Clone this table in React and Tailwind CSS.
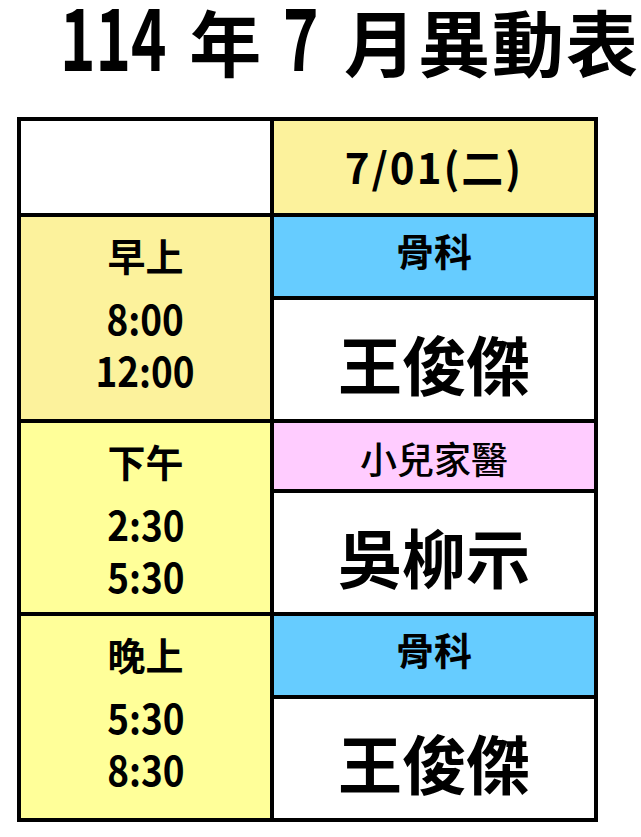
const FONT = "font-['Noto_Sans_CJK_TC','Noto_Sans_CJK_JP',sans-serif]";

function TimeRow({ label, t1, t2, leftBg, topBg, topText, topH, topWeight, topPad, name, bottomBorder }) {
  return (
    <div className={`flex ${bottomBorder ? "border-b-4 border-black" : ""}`}>
      <div className={`w-[253px] shrink-0 border-r-4 border-black ${leftBg} flex flex-col items-center pt-[12px]`}>
        <div className="text-[38px] font-bold leading-[52px]">{label}</div>
        <div className="mt-[10px] text-[41px] font-bold leading-[52px] text-center scale-x-[0.9]">
          {t1}
          <br />
          {t2}
        </div>
      </div>
      <div className="flex-1 flex flex-col">
        <div className={`${topH} ${topBg} border-b-4 border-black flex items-center justify-center`}>
          <span className={`${topWeight} leading-none ${topPad}`}>{topText}</span>
        </div>
        <div className="h-[119px] bg-white flex items-center justify-center">
          <span className="text-[64px] font-bold leading-none pt-[4px]">{name}</span>
        </div>
      </div>
    </div>
  );
}

export default function App() {
  return (
    <div className={`w-[641px] h-[837px] bg-white text-black ${FONT}`}>
      <div className="h-[117px] pl-[60px] flex items-baseline font-bold leading-[0.8] whitespace-nowrap">
        <span className="inline-block text-[86px] origin-left scale-x-[0.7] -mr-[44px]">114</span>
        <span className="ml-[21px] text-[72px]">年</span>
        <span className="ml-[22px] inline-block text-[86px] origin-left scale-x-[0.7] -mr-[15px]">7</span>
        <span className="ml-[25px] text-[72px] tracking-[2px]">月異動表</span>
      </div>
      <div className="ml-[17px] w-[581px] border-4 border-black">
        <div className="flex h-[96px] border-b-4 border-black">
          <div className="w-[253px] shrink-0 border-r-4 border-black bg-white" />
          <div className="flex-1 bg-[#fcf29c] flex items-center justify-center">
            <span className="text-[42px] font-bold leading-none tracking-[2px] pb-[2px]">7/01(二)</span>
          </div>
        </div>
        <TimeRow
          label="早上"
          t1="8:00"
          t2="12:00"
          leftBg="bg-[#fcf29c]"
          topBg="bg-[#66ccff]"
          topText="骨科"
          topH="h-[83px]"
          topWeight="text-[38px] font-bold"
          topPad="pb-[14px]"
          name="王俊傑"
          bottomBorder
        />
        <TimeRow
          label="下午"
          t1="2:30"
          t2="5:30"
          leftBg="bg-[#ffff99]"
          topBg="bg-[#ffccff]"
          topText="小兒家醫"
          topH="h-[70px]"
          topWeight="text-[37px] font-medium"
          topPad="pt-[4px]"
          name="吳柳示"
          bottomBorder
        />
        <TimeRow
          label="晚上"
          t1="5:30"
          t2="8:30"
          leftBg="bg-[#ffff99]"
          topBg="bg-[#66ccff]"
          topText="骨科"
          topH="h-[83px]"
          topWeight="text-[38px] font-bold"
          topPad="pb-[14px]"
          name="王俊傑"
        />
      </div>
    </div>
  );
}
